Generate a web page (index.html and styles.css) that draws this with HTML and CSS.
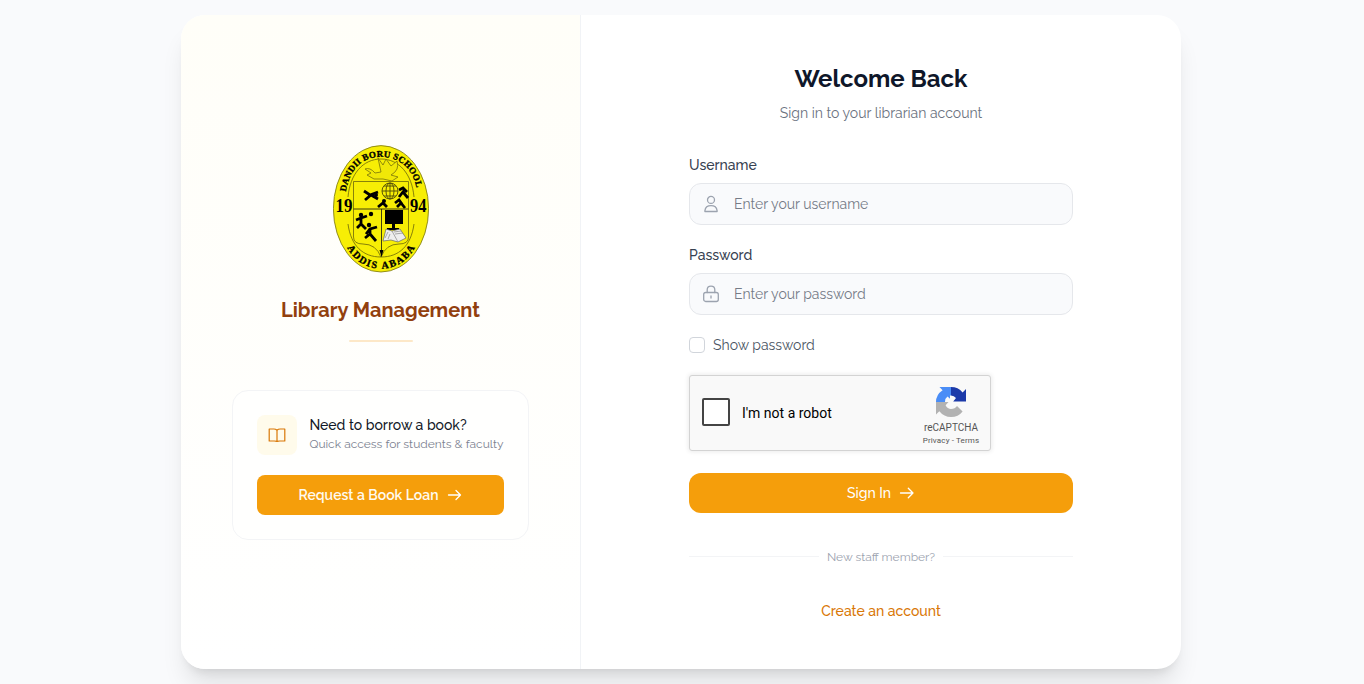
FILE: index.html
```html
<!DOCTYPE html>
<html lang="en">
<head>
<meta charset="utf-8">
<title>Library Management - Sign In</title>
<link rel="stylesheet" href="styles.css">
</head>
<body>
<main class="card">
  <section class="brand">
    <svg class="crest" viewBox="0 0 96 128" role="img" aria-label="Dandii Boru School crest">
      <defs>
        <path id="arcTop" d="M12.500 49C16 23 30 12 48 12S80 23 84 45"/>
        <path id="arcBottom" d="M8 89C16 113 30 123.500 48 123.500S80 113 88 89"/>
      </defs>
      <ellipse cx="48" cy="63.800" rx="47.600" ry="63.200" fill="#f7ee05" stroke="#77730e" stroke-width=".8"/>
      <g fill="none" stroke="#6b660a" stroke-width=".8">
        <path d="M15 52C17 29 30 14 48 14S79 29 81 52M15 79C18 101 30 112 48 112S78 101 81 79"/>
        <path d="M20.500 36.500H75.500V92Q75.500 99 66 99Q53 99 48 112Q43 99 30 99Q20.500 99 20.500 92Z"/>
        <path d="M20.500 64H75.500M48.500 64V106" stroke="#111"/>
      </g>
      <path d="M46.500 105h4l-2 7z"/>
      <g class="crest-name">
        <text class="crest-arc" font-size="9"><textPath href="#arcTop" startOffset="50%" text-anchor="middle" textLength="106">DANDII BORU SCHOOL</textPath></text>
        <text class="crest-arc" font-size="10"><textPath href="#arcBottom" startOffset="50%" text-anchor="middle" textLength="84">ADDIS ABABA</textPath></text>
        <text x="2.500" y="66.500" font-size="19" textLength="17" lengthAdjust="spacingAndGlyphs">19</text>
        <text x="77" y="66.500" font-size="19" textLength="16.500" lengthAdjust="spacingAndGlyphs">94</text>
      </g>
      <path d="M32 24Q37 22 42 28L48 27L45 13L50 20L53 14L58 21L64 16Q67 25 58 30L65 32L59 36L50 34L41 34L34 30L38 28Z" fill="#f0e708" stroke="#77720b" stroke-width=".8"/>
      <g fill="none" stroke="#4b4709" stroke-width=".9"><circle cx="57" cy="46" r="8"/><ellipse cx="57" cy="46" rx="4" ry="8"/><path d="M49 46h16M51 41h12M51 51h12M57 38v16"/></g>
      <g class="figures">
        <path d="M31 46L37 50L45 47M32 55L38 50L45 54M45 62L50 58L54 62M66 45L70 43L74 47M66 52L70 47L75 53M62 58L66 55L69 59M64 62L68 58L72 63M23 75L28 73L34 71M28 73L28 79L24 83M28 79L33 84M33 89L37 84L44 82M37 83L37 89L43 96M37 89L32 93"/>
      </g>
      <g><circle cx="43" cy="50" r="2"/><circle cx="51" cy="56" r="2"/><circle cx="28" cy="70" r="2.200"/><circle cx="36" cy="80" r="2.200"/><circle cx="38" cy="69" r="2.200"/></g>
      <path d="M52 65h18v14H52zM59 79h3v5h-3zM54 83h12v2H54z"/>
      <path d="M53 84L59 86L67 84L73 93L65 97L58 95L50 96Z" fill="#eee" stroke="#666" stroke-width=".7"/>
      <path d="M59 86L65 97M61 87L68 86M62 89L70 88M55 87L52 93M57 89L55 94" fill="none" stroke="#888" stroke-width=".7"/>
    </svg>
    <h1 class="brand-title">Library Management</h1>
    <div class="rule"></div>
    <div class="loan">
      <div class="loan-head">
        <div class="loan-icon">
          <svg width="20" height="20" viewBox="0 0 20 20" fill="none" stroke="#d97706" stroke-width="1.200" stroke-linejoin="round"><path d="M10 5.200Q8.700 4 6.800 4H2.200V16H7.200Q8.800 16 10 16.400Q11.200 16 12.800 16H17.800V4H13.200Q11.300 4 10 5.200ZM10 5.200V16.300"/></svg>
        </div>
        <div class="loan-text"><div class="loan-title">Need to borrow a book?</div><div class="loan-sub">Quick access for students &amp; faculty</div></div>
      </div>
      <a class="button loan-button"><span>Request a Book Loan</span><svg class="arrow" viewBox="0 0 16 16"><path d="M1.500 8H13.500M9 3.500L13.500 8L9 12.500"/></svg></a>
    </div>
  </section>
  <section class="login">
    <form class="form">
      <h2 class="title">Welcome Back</h2>
      <p class="subtitle">Sign in to your librarian account</p>
      <label class="label" for="user">Username</label>
      <div class="field">
        <svg width="20" height="20" viewBox="0 0 20 20" class="field-icon"><circle cx="10" cy="5.900" r="3.500"/><path d="M3.900 17.500V16.600Q4.600 11.700 10 11.700T16.100 16.600V17.500Z"/></svg>
        <input class="input" id="user" type="text" placeholder="Enter your username">
      </div>
      <label class="label" for="pass">Password</label>
      <div class="field">
        <svg width="20" height="20" viewBox="0 0 20 20" class="field-icon"><rect x="2.700" y="8.500" width="14.600" height="9" rx="2"/><path d="M6.200 8.500V5.800Q6.200 2.200 10 2.200T13.800 5.800V8.500M10 12V14"/></svg>
        <input class="input" id="pass" type="password" placeholder="Enter your password">
      </div>
      <label class="show"><span class="box"></span><span>Show password</span></label>
      <div class="captcha">
        <span class="captcha-box"></span><span class="captcha-label">I'm not a robot</span>
        <div class="captcha-brand">
          <svg width="32" height="32" viewBox="0 0 32 32">
            <path d="M31 15.500V3L27.600 6.400Q23.200 1 16 1V9.500Q19.100 9.500 21 12L18.200 15.500Z" fill="#1c3aa9"/>
            <path d="M16 1H4.500L7.600 4.200Q1 8.500 1 16H10Q10 12 12.500 10.400L15 12.700V9.500H16Z" fill="#4a8df6"/>
            <path d="M1 16V28.500L4.300 25.200Q9 31 16 31Q23.300 31 27.600 25.500L22 20Q20 23 16 23Q12.500 23 10.600 19.200L13.500 16Z" fill="#b2b2b2"/>
          </svg>
          <div class="captcha-name">reCAPTCHA</div>
          <div class="captcha-links">Privacy - Terms</div>
        </div>
      </div>
      <button class="button sign" type="button"><span>Sign In</span><svg class="arrow" viewBox="0 0 16 16"><path d="M1.500 8H14M9.300 3.200L14 8L9.300 12.800"/></svg></button>
      <div class="divider"><span>New staff member?</span></div>
      <a class="create">Create an account</a>
    </form>
  </section>
</main>
</body>
</html>
```
FILE: styles.css
```css
* { box-sizing: border-box; }
body { margin: 0; height: 684px; padding: 15px 0 0 181px; overflow: hidden; background: #f9fafc; font-family: Raleway, Lato, sans-serif; font-size: 14px; line-height: 20px; }
h1, h2, p { margin: 0; }
.card { width: 1000px; height: 654px; display: flex; border-radius: 24px; overflow: hidden; background: #fff; box-shadow: 0 20px 25px -5px rgba(0,0,0,.1), 0 8px 10px -6px rgba(0,0,0,.1); }
.brand { width: 400px; padding: 130px 51px 0; border-right: 1px solid #f1f3f6; background: linear-gradient(#fffef8, #fff); display: flex; flex-direction: column; align-items: center; }
.crest { width: 96px; height: 128px; margin-left: 1px; flex: none; }
.crest-name { font-family: "Liberation Serif", serif; font-weight: 700; }
.crest-arc { stroke: #000; stroke-width: .35; }
.figures { fill: none; stroke: #000; stroke-width: 2.8; }
.brand-title { margin-top: 23px; font-size: 20px; line-height: 28px; font-weight: 700; color: #92400e; white-space: nowrap; }
.rule { width: 64px; height: 2px; margin-top: 16px; border-radius: 2px; background: #fde8c8; }
.loan { width: 297px; height: 150px; margin-top: 48px; padding: 24px; border: 1px solid #f3f4f6; border-radius: 16px; background: #fffffe; }
.loan-head { display: flex; gap: 12px; height: 40px; margin-bottom: 20px; }
.loan-icon { flex: none; width: 40px; height: 40px; border-radius: 8px; background: #fffbeb; display: grid; place-items: center; }
.loan-text { white-space: nowrap; padding-left: .4px; }
.loan-title { color: #111827; font-weight: 500; }
.loan-sub { color: #7b8190; font-size: 12px; line-height: 18px; }
.button { display: flex; height: 40px; align-items: center; justify-content: center; gap: 8px; border: 0; background: #f59e0b; color: #fff; font: 500 14px/20px Raleway, Lato, sans-serif; }
.loan-button { border-radius: 8px; font-weight: 600; color: #fffaf0; }
.arrow { width: 16px; height: 16px; fill: none; stroke: #fff; stroke-width: 1.3; stroke-linecap: round; stroke-linejoin: round; }
.login { width: 600px; padding: 48px 108px; }
.form { width: 384px; }
.title { text-align: center; font-size: 24px; line-height: 32px; font-weight: 700; color: #0f172a; }
.subtitle { margin: 8px 0 32px; text-align: center; color: #6b7280; }
.label { display: block; color: #374151; font-weight: 500; }
.field { display: flex; align-items: center; gap: 13px; height: 42px; padding: 0 11px; margin: 8px 0 20px; border: 1px solid #e5e7eb; border-radius: 12px; background: #f9fafc; }
.field-icon { fill: none; stroke: #9ca3af; stroke-width: 1.3; stroke-linejoin: round; stroke-linecap: round; flex: none; }
.input { flex: 1; padding: 0; border: 0; outline: 0; background: transparent; font: 14px/20px Raleway, Lato, sans-serif; }
.input::placeholder { color: #757b87; }
.show { display: flex; align-items: center; gap: 8px; height: 20px; color: #4b5563; }
.box { width: 16px; height: 16px; border: 1px solid #d1d5db; border-radius: 4px; }
.captcha { display: flex; align-items: center; width: 302px; height: 76px; margin: 20px 0 22px; padding-left: 12px; border: 1px solid #d3d3d3; border-radius: 3px; background: #f9f9f9; box-shadow: 0 0 4px 1px rgba(0,0,0,.08); font-family: Roboto, sans-serif; color: #000; }
.captcha-box { width: 28px; height: 28px; border: 2px solid #444; border-radius: 2px; background: #fff; margin-top: -2px; }
.captcha-label { margin-left: 12px; }
.captcha-brand { width: 78px; margin-left: auto; padding-top: 5px; color: #555; text-align: center; }
.captcha-brand svg { display: block; margin: 0 auto; }
.captcha-name { font-size: 10px; line-height: 14px; margin-top: 3px; }
.captcha-links { font-size: 8px; line-height: 11px; letter-spacing: .15px; }
.sign { width: 384px; border-radius: 12px; }
.divider { display: flex; align-items: center; gap: 8px; height: 16px; margin-top: 35px; color: #9ca3af; font-size: 12px; white-space: nowrap; }
.divider span { padding-top: 1px; }
.divider::before, .divider::after { content: ""; flex: 1; height: 1px; background: #f3f4f6; }
.create { display: block; margin-top: 37px; text-align: center; color: #d97706; font-weight: 500; }
```
